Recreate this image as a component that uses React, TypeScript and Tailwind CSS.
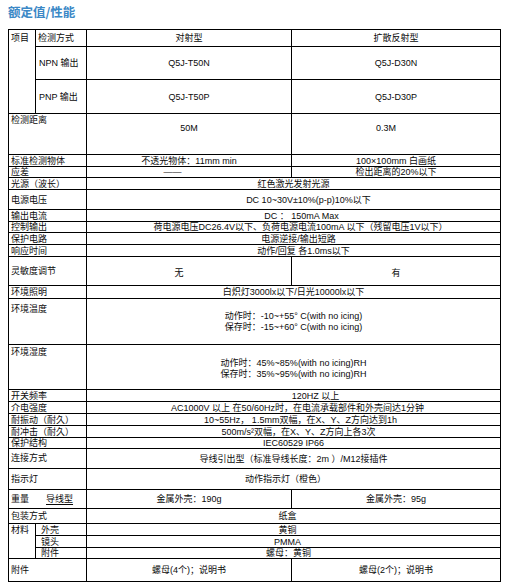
import React from 'react';

type TdProps = {
  children?: React.ReactNode;
  className?: string;
  colSpan?: number;
  rowSpan?: number;
};

// one bordered table cell
const Td: React.FC<TdProps> = ({ children, className = '', colSpan, rowSpan }) => (
  <td colSpan={colSpan} rowSpan={rowSpan} className={`border border-black p-0 align-middle ${className}`}>
    {children}
  </td>
);

// label cell spanning both label columns
const Label: React.FC<TdProps> = ({ children, className = '' }) => (
  <Td colSpan={2} className={`pl-[2px] text-left ${className}`}>
    {children}
  </Td>
);

// full-width value cell
const Full: React.FC<TdProps> = ({ children, className = '' }) => (
  <Td colSpan={2} className={`text-center ${className}`}>
    {children}
  </Td>
);

const Row: React.FC<{ h: string; children: React.ReactNode }> = ({ h, children }) => (
  <tr className={h}>{children}</tr>
);

const App: React.FC = () => {
  return (
    <div className="min-h-screen w-[507px] bg-white font-['Liberation_Sans','Noto_Sans_CJK_SC',sans-serif] text-[#0a0a0a]">
      <div className="px-[8px] pt-[4px]">
        <h1 className="text-[12.5px] leading-[16px] font-bold text-[#3b88c6] font-['Noto_Sans_CJK_SC',sans-serif]">
          额定值/性能
        </h1>
        <table className="mt-[9px] w-[492px] table-fixed border-collapse text-[9px] leading-[10px] font-['Liberation_Sans','Noto_Sans_CJK_SC',sans-serif]">
          <colgroup>
            <col className="w-[27px]" />
            <col className="w-[51px]" />
            <col className="w-[205px]" />
            <col className="w-[209px]" />
          </colgroup>
          <tbody>
            <Row h="h-[17px]">
              <Td rowSpan={3} className="align-top pl-[2px] pt-[3px]">项目</Td>
              <Td className="pl-[2px]">检测方式</Td>
              <Td className="text-center">对射型</Td>
              <Td className="text-center">扩散反射型</Td>
            </Row>
            <Row h="h-[33px]">
              <Td className="pl-[3px]">NPN 输出</Td>
              <Td className="text-center">Q5J-T50N</Td>
              <Td className="text-center">Q5J-D30N</Td>
            </Row>
            <Row h="h-[34px]">
              <Td className="pl-[3px]">PNP 输出</Td>
              <Td className="text-center">Q5J-T50P</Td>
              <Td className="text-center">Q5J-D30P</Td>
            </Row>
            <Row h="h-[41px]">
              <Label className="align-top pt-[1px]">检测距离</Label>
              <Td className="text-center align-top pt-[9px]">50M</Td>
              <Td className="text-center align-top pt-[9px] pr-[20px]">0.3M</Td>
            </Row>
            <Row h="h-[12px]">
              <Label>标准检测物体</Label>
              <Td className="text-center">不透光物体：11mm min</Td>
              <Td className="text-center">100×100mm 白画纸</Td>
            </Row>
            <Row h="h-[11px]">
              <Label>应差</Label>
              <Td className="text-center pr-[33px]">——</Td>
              <Td className="text-center">检出距离的20%以下</Td>
            </Row>
            <Row h="h-[12px]">
              <Label>光源（波长）</Label>
              <Full>红色激光发射光源</Full>
            </Row>
            <Row h="h-[20px]">
              <Label>电源电压</Label>
              <Full className="pl-[30px]">DC 10~30V±10%(p-p)10%以下</Full>
            </Row>
            <Row h="h-[12px]">
              <Label>输出电流</Label>
              <Full className="pl-[16px]">DC ： 150mA Max</Full>
            </Row>
            <Row h="h-[11px]">
              <Label>控制输出</Label>
              <Full className="pl-[14px]">荷电源电压DC26.4V以下、负荷电源电流100mA 以下（残留电压1V以下）</Full>
            </Row>
            <Row h="h-[12px]">
              <Label>保护电路</Label>
              <Full className="pl-[10px]">电源逆接/输出短路</Full>
            </Row>
            <Row h="h-[12px]">
              <Label>响应时间</Label>
              <Full className="pl-[20px]">动作/回复 各1.0ms以下</Full>
            </Row>
            <Row h="h-[29px]">
              <Label>灵敏度调节</Label>
              <Td className="text-center pr-[20px] pt-[4px]">无</Td>
              <Td className="text-center pt-[4px]">有</Td>
            </Row>
            <Row h="h-[13px]">
              <Label>环境照明</Label>
              <Full>白炽灯3000lx以下/日光10000lx以下</Full>
            </Row>
            <Row h="h-[46px]">
              <Label className="align-top pt-[5px]">环境温度</Label>
              <Full>
                <div className="inline-block text-left leading-[11px]">
                  动作时：-10~+55° C(with no icing)
                  <br />
                  保存时：-15~+60° C(with no icing)
                </div>
              </Full>
            </Row>
            <Row h="h-[45px]">
              <Label className="align-top pt-[2px]">环境湿度</Label>
              <Full>
                <div className="inline-block text-left leading-[11px] pt-[4px]">
                  动作时：45%~85%(with no icing)RH
                  <br />
                  保存时：35%~95%(with no icing)RH
                </div>
              </Full>
            </Row>
            <Row h="h-[12px]">
              <Label>开关频率</Label>
              <Full className="pl-[44px]">120HZ 以上</Full>
            </Row>
            <Row h="h-[12px]">
              <Label>介电强度</Label>
              <Full className="pl-[8px]">AC1000V 以上 在50/60Hz时，在电流承载部件和外壳间达1分钟</Full>
            </Row>
            <Row h="h-[12px]">
              <Label>耐振动（耐久）</Label>
              <Full className="pl-[14px]">10~55Hz， 1.5mm双幅，在X、Y、Z方向达到1h</Full>
            </Row>
            <Row h="h-[12px]">
              <Label>耐冲击（耐久）</Label>
              <Full className="pl-[10px]">500m/s²双幅，在X、Y、Z方向上各3次</Full>
            </Row>
            <Row h="h-[11px]">
              <Label>保护结构</Label>
              <Full>IEC60529 IP66</Full>
            </Row>
            <Row h="h-[20px]">
              <Label className="align-top pt-[4px]">连接方式</Label>
              <Full>导线引出型（标准导线长度：2m ）/M12接插件</Full>
            </Row>
            <Row h="h-[21px]">
              <Label>指示灯</Label>
              <Full className="pr-[16px]">动作指示灯（橙色）</Full>
            </Row>
            <Row h="h-[19px]">
              <Label>
                <span>重量</span>
                <span className="ml-[17px] underline underline-offset-[2px]">导线型</span>
              </Label>
              <Td className="text-center">金属外壳：190g</Td>
              <Td className="text-center">金属外壳：95g</Td>
            </Row>
            <Row h="h-[15px]">
              <Label>包装方式</Label>
              <Full className="pr-[12px]">纸盒</Full>
            </Row>
            <Row h="h-[12px]">
              <Td rowSpan={3} className="align-top pl-[2px] pt-[1px]">材料</Td>
              <Td className="pl-[5px]">外壳</Td>
              <Full className="pr-[12px]">黄铜</Full>
            </Row>
            <Row h="h-[12px]">
              <Td className="pl-[5px]">镜头</Td>
              <Full className="pr-[12px]">PMMA</Full>
            </Row>
            <Row h="h-[11px]">
              <Td className="pl-[5px]">附件</Td>
              <Full className="pr-[10px]">螺母：黄铜</Full>
            </Row>
            <Row h="h-[23px]">
              <Label>附件</Label>
              <Td className="text-center">螺母(4个)；说明书</Td>
              <Td className="text-center">螺母(2个)；说明书</Td>
            </Row>
          </tbody>
        </table>
      </div>
    </div>
  );
};

export default App;
